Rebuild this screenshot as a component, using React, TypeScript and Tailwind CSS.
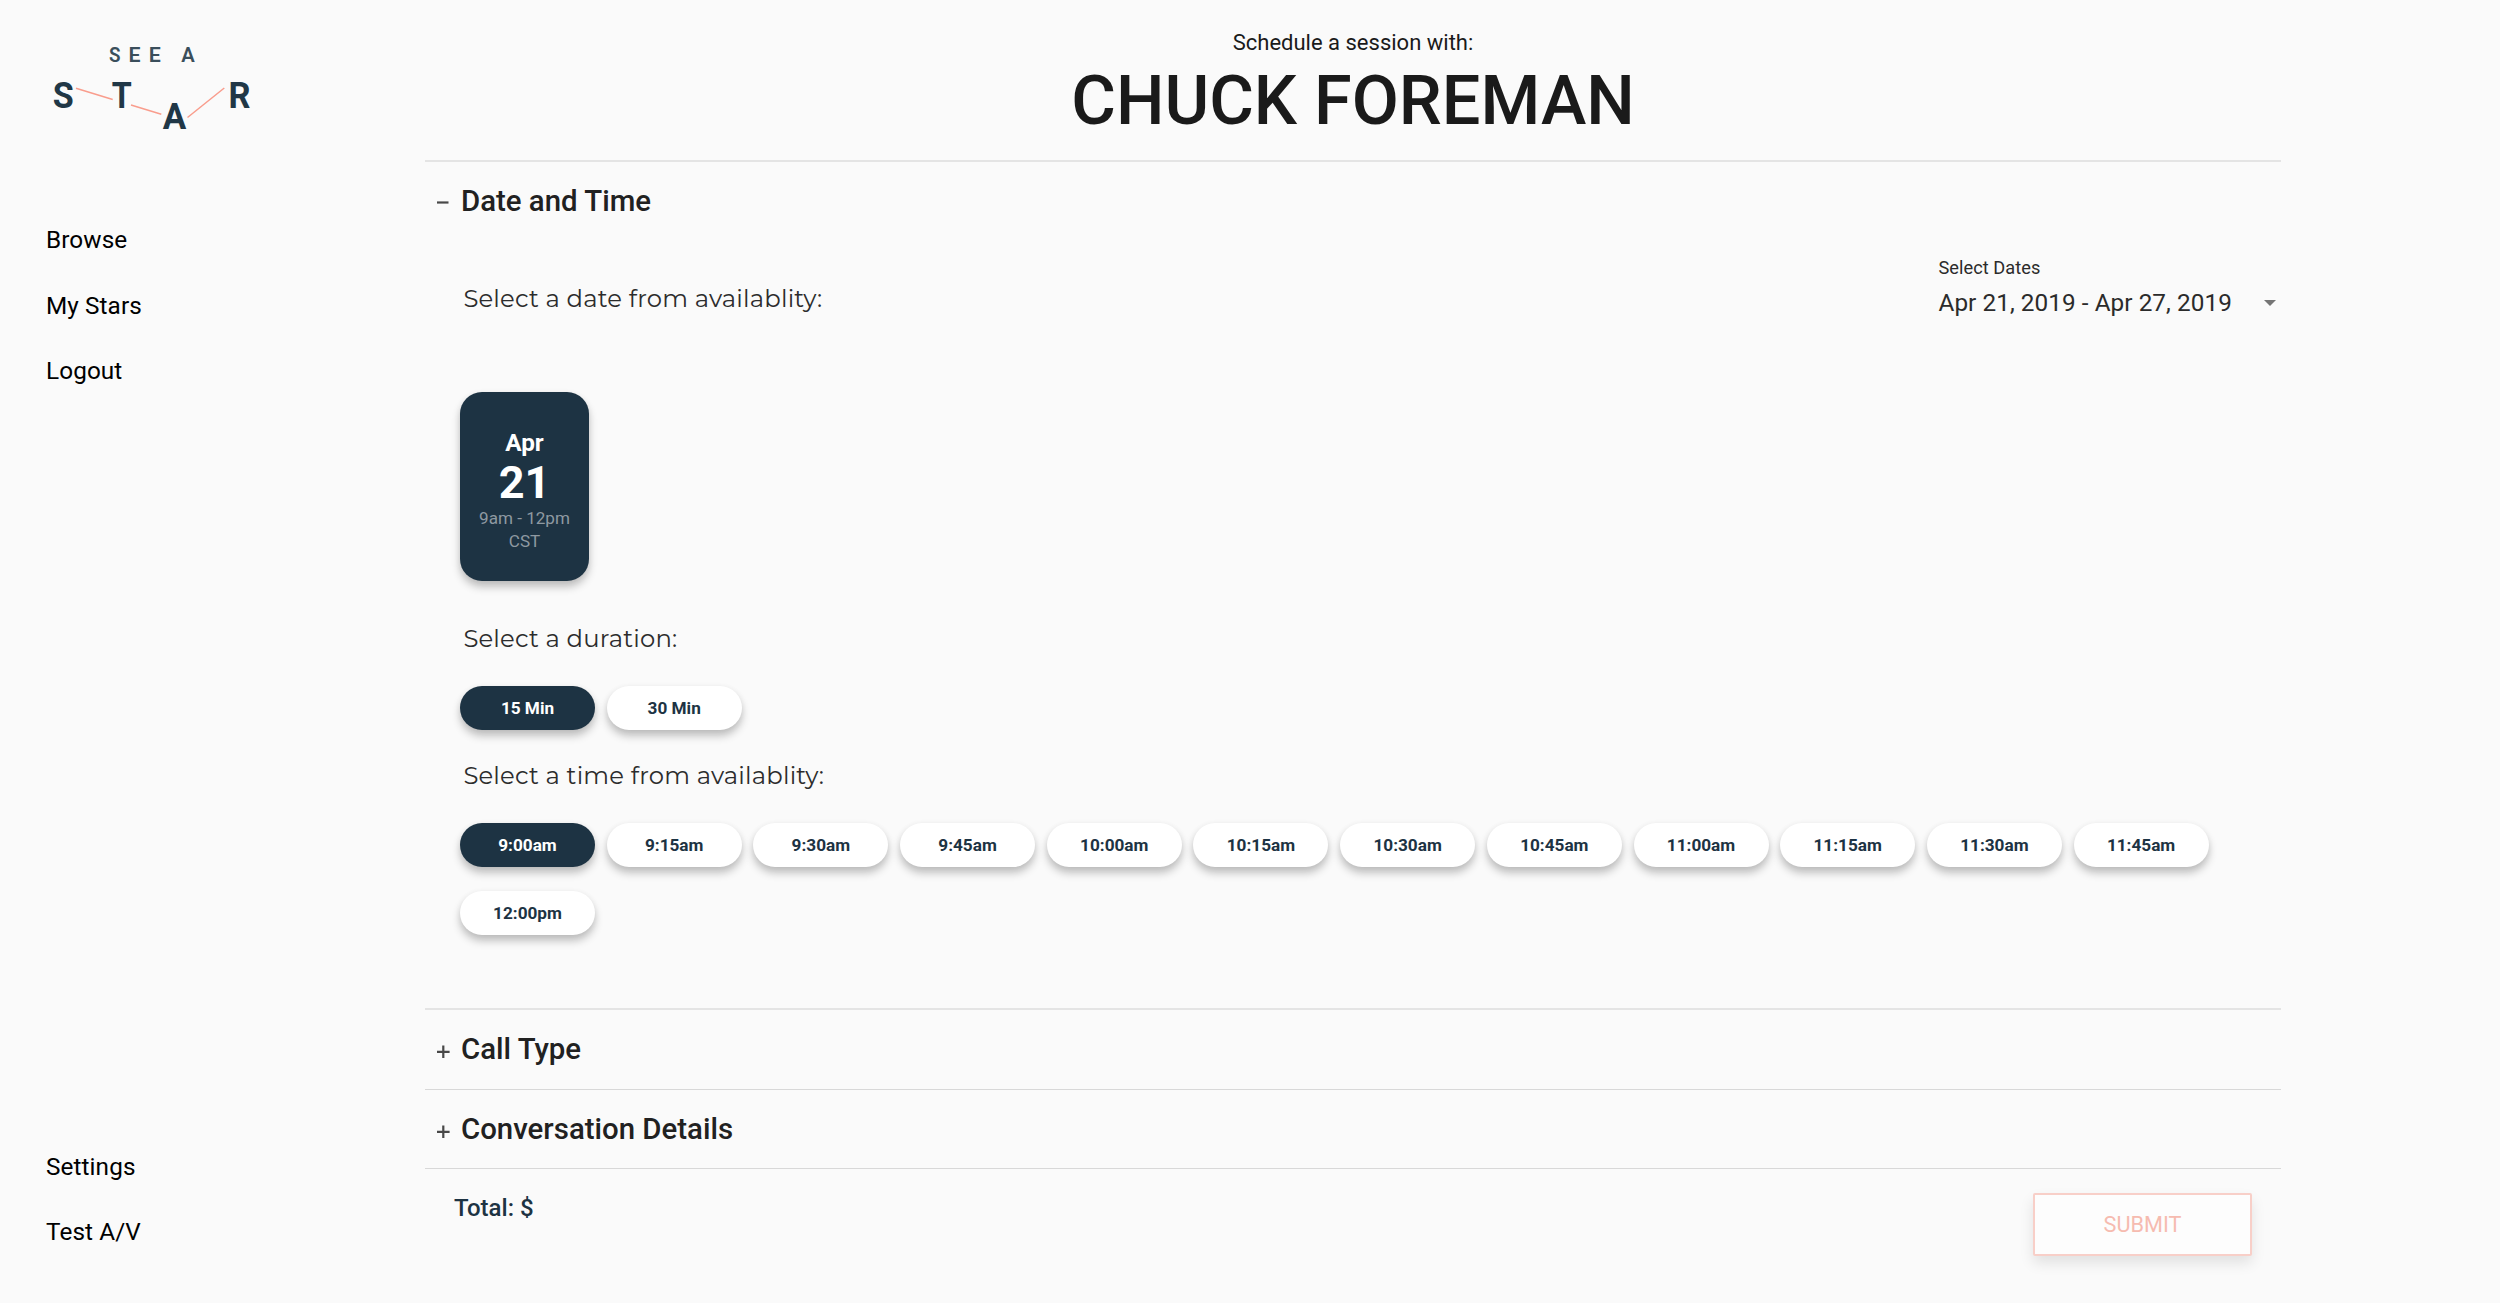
import { useState } from 'react';
import clsx from 'clsx';

const durations = ['15 Min', '30 Min'];

const times = [
  '9:00am', '9:15am', '9:30am', '9:45am', '10:00am', '10:15am', '10:30am',
  '10:45am', '11:00am', '11:15am', '11:30am', '11:45am', '12:00pm',
];

function Logo() {
  return (
    <svg className="block w-[220px] h-[110px]" viewBox="40 30 220 110" fontFamily="Roboto, sans-serif" fill="#203746">
      <g fontSize="20.5" fontWeight="600" fill="#3a4e5b">
        <text x="109" y="61.5" textLength="11.5" lengthAdjust="spacingAndGlyphs">S</text>
        <text x="128.5" y="61.5" textLength="12" lengthAdjust="spacingAndGlyphs">E</text>
        <text x="148.7" y="61.5" textLength="12" lengthAdjust="spacingAndGlyphs">E</text>
        <text x="181.2" y="61.5" textLength="13.5" lengthAdjust="spacingAndGlyphs">A</text>
      </g>
      <g fontSize="36.8" fontWeight="700">
        <text x="52.8" y="108.4" textLength="21" lengthAdjust="spacingAndGlyphs">S</text>
        <text x="111.8" y="108.4" textLength="20" lengthAdjust="spacingAndGlyphs">T</text>
        <text x="162.8" y="129" textLength="23.5" lengthAdjust="spacingAndGlyphs">A</text>
        <text x="228.5" y="108.4" textLength="22" lengthAdjust="spacingAndGlyphs">R</text>
      </g>
      <path d="M76 88.3 112.7 99.5M131 105l30.3 9.2M187.5 117.5 224.3 88" stroke="#f99d8d" strokeWidth="1.5" fill="none" />
    </svg>
  );
}

function NavItem({ label }: { label: string }) {
  return <a className="block h-[65.2px] leading-[65px] text-[24.3px] tracking-[0.1px] text-black">{label}</a>;
}

function Pill({ label, active, onClick }: { label: string; active: boolean; onClick: () => void }) {
  return (
    <button
      onClick={onClick}
      className={clsx(
        'w-[135px] h-[44px] rounded-[22px] text-[17.2px] leading-[44px] font-bold shadow-[0_6px_9px_rgba(0,0,0,0.23),0_1px_6px_rgba(0,0,0,0.05)]',
        active ? 'bg-[#1d3343] text-white' : 'bg-white text-[#1d3343]'
      )}
    >
      {label}
    </button>
  );
}

function SectionHeader({ title, open }: { title: string; open?: boolean }) {
  return (
    <div className="flex items-center h-[78px] pl-3">
      <svg className="w-[14px] h-[14px] mt-[5px]" viewBox="0 0 14 14" stroke="#484848" strokeWidth="2.2">
        {open ? <path d="M0 5.5h11.5" /> : <path d="M0 6.8h12.6M6.3 0.5v12.6" />}
      </svg>
      <h2 className="ml-2.5 text-[29.4px] leading-[78px] font-medium text-[#212121]">{title}</h2>
    </div>
  );
}

function Label({ children }: { children: string }) {
  return (
    <p className="pl-[3.4px] h-[31px] leading-[31px] font-[Montserrat,sans-serif] text-[24.3px] tracking-[0.18px] text-[#2c2c2c]">
      {children}
    </p>
  );
}

export default function App() {
  const [duration, setDuration] = useState('15 Min');
  const [time, setTime] = useState('9:00am');

  return (
    <div className="flex w-[2500px] h-[1303px] overflow-hidden bg-[#fafafa] font-[Roboto,sans-serif]">
      <aside className="flex flex-col w-[425px] h-full shrink-0 pt-[30px] pb-[39px]">
        <div className="pl-10">
          <Logo />
        </div>
        <nav className="pl-[46px] pt-[67.4px]">
          <NavItem label="Browse" />
          <NavItem label="My Stars" />
          <NavItem label="Logout" />
        </nav>
        <nav className="pl-[46px] mt-auto">
          <NavItem label="Settings" />
          <NavItem label="Test A/V" />
        </nav>
      </aside>

      <main className="w-[1856px] pt-7">
        <header className="text-center text-[#1a1a1a] h-[132px]">
          <p className="text-[22px] leading-[29px]">Schedule a session with:</p>
          <h1 className="text-[68.4px] leading-[88px] font-medium">CHUCK FOREMAN</h1>
        </header>

        <section className="h-[848px] border-t-2 border-[#e4e4e4]">
          <SectionHeader title="Date and Time" open />
          <div className="pl-[35px]">
            <div className="flex justify-between h-[152px]">
              <div className="pt-[43px]">
                <Label>Select a date from availablity:</Label>
              </div>
              <div className="w-[342.5px] pt-4 text-[#2b2b2b]">
                <div className="text-[18.2px] leading-6 tracking-[0.05px]">Select Dates</div>
                <div className="flex items-center justify-between pr-[5px] text-[24.3px] leading-[45px] tracking-[0.06px]">
                  <span>Apr 21, 2019 - Apr 27, 2019</span>
                  <svg className="w-3 h-1.5" viewBox="0 0 12 6" fill="#757575">
                    <path d="M0 0h12L6 6z" />
                  </svg>
                </div>
              </div>
            </div>

            <div className="w-[129px] h-[189px] rounded-[22px] pt-[35px] bg-[#1d3343] text-center text-white shadow-[0_6px_9px_rgba(0,0,0,0.23),0_1px_6px_rgba(0,0,0,0.05)]">
              <div className="text-[24.3px] leading-[31px] font-bold">Apr</div>
              <div className="text-[45px] leading-[49px] font-bold">21</div>
              <div className="text-[17.1px] leading-[23px] text-[#8e99a1]">9am - 12pm</div>
              <div className="text-[17.1px] leading-[22px] text-[#8e99a1]">CST</div>
            </div>

            <div className="pt-[42px]">
              <Label>Select a duration:</Label>
            </div>
            <div className="flex gap-[11.7px] pt-8">
              {durations.map((d) => (
                <Pill key={d} label={d} active={d === duration} onClick={() => setDuration(d)} />
              ))}
            </div>

            <div className="pt-[30px]">
              <Label>Select a time from availablity:</Label>
            </div>
            <div className="flex flex-wrap gap-x-[11.7px] gap-y-[24.4px] pt-8 w-[1800px]">
              {times.map((t) => (
                <Pill key={t} label={t} active={t === time} onClick={() => setTime(t)} />
              ))}
            </div>
          </div>
        </section>

        <section className="border-t-2 border-[#e4e4e4] pb-px">
          <SectionHeader title="Call Type" />
        </section>
        <section className="border-t border-[#d8d8d8]">
          <SectionHeader title="Conversation Details" />
        </section>

        <footer className="flex items-start justify-between border-t border-[#d8d8d8] pl-[29px] pr-[29px] pt-6">
          <div className="pt-px text-[24px] leading-[29px] font-medium text-[#1d3343]">Total: $</div>
          <button className="w-[219px] h-[63px] pt-0.5 border-2 border-[#f8cfc8] rounded-[2px] bg-[#fdfdfd] text-[21.7px] text-[#f6bbb0] shadow-[0_7px_14px_rgba(0,0,0,0.1)]">
            SUBMIT
          </button>
        </footer>
      </main>
    </div>
  );
}
